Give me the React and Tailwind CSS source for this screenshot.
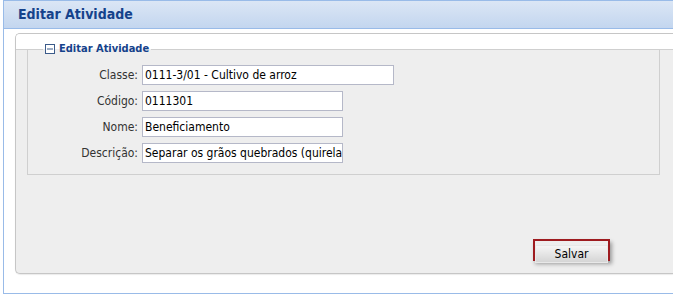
export default function App() {
  const rows = [
    { label: 'Classe:', value: '0111-3/01 - Cultivo de arroz', wide: true },
    { label: 'Código:', value: '0111301' },
    { label: 'Nome:', value: 'Beneficiamento' },
    { label: 'Descrição:', value: 'Separar os grãos quebrados (quirelas) do arroz' },
  ];

  return (
    <div className="w-[673px] h-[295px] bg-white overflow-hidden font-['DejaVu_Sans_Condensed','Liberation_Sans',sans-serif]">
      <div className="ml-[3px] h-[294px] border-l border-t border-b border-[#99bbe8] flex flex-col">
        {/* window header */}
        <div className="h-[28px] shrink-0 bg-gradient-to-b from-[#dbe6f5] to-[#c3d6ef] border-b border-[#99bbe8] flex items-center pl-[14px]">
          <span className="text-[14px] font-bold text-[#15428b]">Editar Atividade</span>
        </div>

        <div className="flex-1 bg-white pt-[4px] pl-[11px] overflow-hidden">
          <div className="h-[241px] rounded-l-[5px] border border-r-0 border-[#c6c6c6] bg-[#eeeeee] flex flex-col overflow-hidden shadow-[0_1px_1px_rgba(0,0,0,0.08)]">
            <div className="h-[16px] shrink-0 bg-white border-b border-[#d0d0d0]" />

            <div className="flex-1 flex flex-col">
              <fieldset className="-mt-[8px] ml-[11px] w-[633px] border border-[#cfcfcf] px-0 pt-[9px] pb-[11px]">
                <legend className="ml-[15px] px-[2px] h-[14px] flex items-center gap-[4px] bg-[linear-gradient(to_bottom,#ffffff_50%,#eeeeee_50%)]">
                  <svg width="10" height="10" viewBox="0 0 10 10" className="shrink-0">
                    <rect x="0.5" y="0.5" width="9" height="9" fill="#fff" stroke="#3b5b8a" />
                    <line x1="2" y1="5" x2="8" y2="5" stroke="#3b5b8a" />
                  </svg>
                  <span className="text-[11px] font-bold text-[#15428b] leading-[14px]">Editar Atividade</span>
                </legend>

                <div className="flex flex-col gap-[6px]">
                  {rows.map((r) => (
                    <div key={r.label} className="flex items-center h-[20px]">
                      <label className="w-[110px] text-right text-[12px] text-[#333]">{r.label}</label>
                      <input
                        readOnly
                        defaultValue={r.value}
                        className={`ml-[4px] h-[20px] border border-[#b5b8c8] bg-white pl-[2px] text-[12px] text-black outline-none ${r.wide ? 'w-[252px]' : 'w-[201px]'}`}
                      />
                    </div>
                  ))}
                </div>
              </fieldset>

              <div className="mt-[64px] pl-[517px]">
                <div className="w-[77px] h-[22px] border-2 border-[#9e1b1f] shadow-[2px_3px_4px_rgba(0,0,0,0.35)]">
                  <button className="w-full h-full border border-[#e8e8e8] bg-gradient-to-b from-[#f5f5f5] to-[#d5d5d5] text-[12px] text-black leading-none">
                    Salvar
                  </button>
                </div>
              </div>
            </div>
          </div>
        </div>
      </div>
    </div>
  );
}
